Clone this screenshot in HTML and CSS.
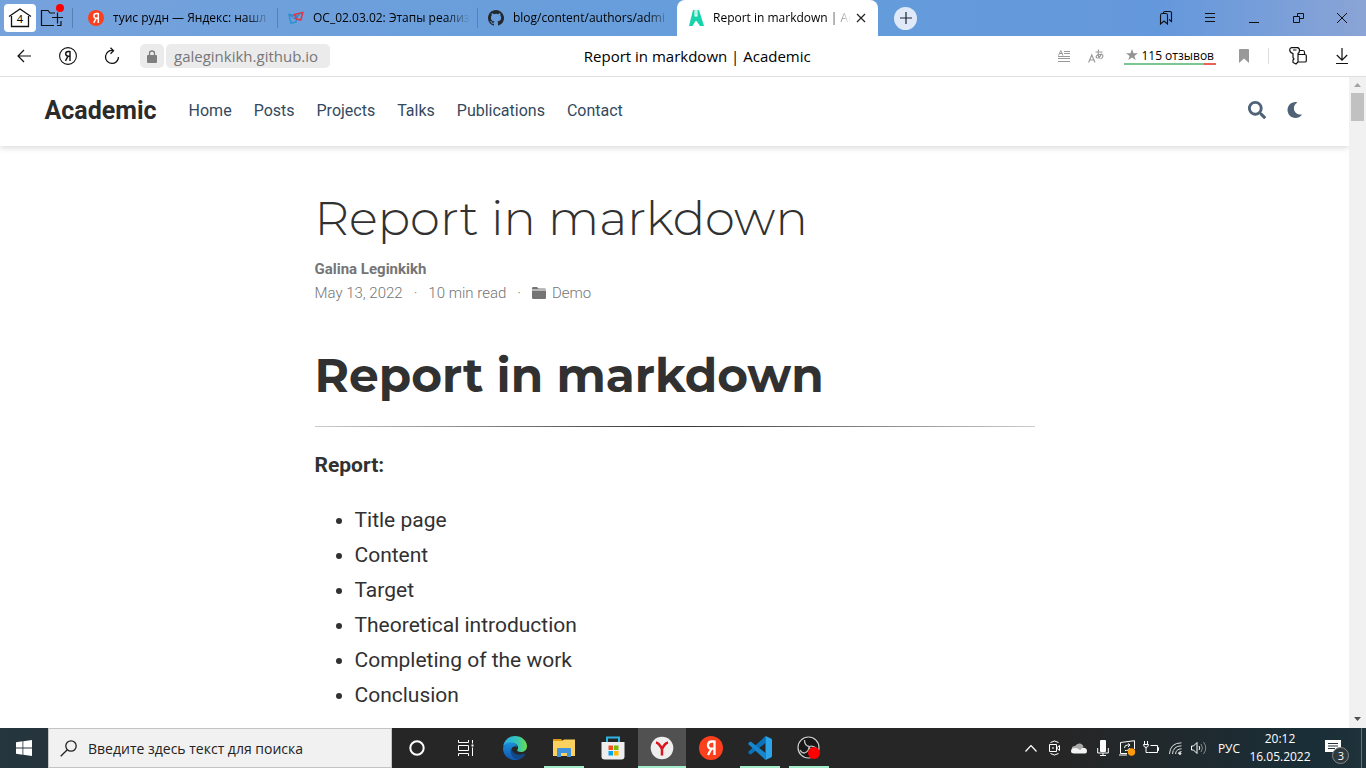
FILE: index.html
```html
<!DOCTYPE html>
<html lang="ru">
<head>
<meta charset="utf-8">
<meta name="viewport" content="width=device-width, initial-scale=1">
<title>Report in markdown | Academic</title>
<link rel="stylesheet" href="styles.css">
</head>
<body>
<header class="tabstrip">
  <button class="home-btn" aria-label="4 tabs">
    <svg width="24" height="22" viewBox="0 0 24 22" fill="none" stroke="#111" stroke-width="1.3"><path d="M3.500 9v10.500h17V9M1 9.500 12 2l11 7.500"/></svg>
    <span class="home-count">4</span>
  </button>
  <button class="icon-btn group-btn" aria-label="Tab groups">
    <svg width="26" height="28" viewBox="0 0 26 28" fill="none" stroke="#111" stroke-width="1.2"><path d="M15 23.500H2.500v-15h6.500l2 2.500h5M22 19v4.500h-4M18.500 10.500v11M13 15.500h11"/><circle cx="21" cy="6" r="4" fill="#f00" stroke="none"/></svg>
  </button>
  <nav class="tabs">
    <a class="tab tab-first" href="#">
      <svg width="16" height="16" viewBox="0 0 16 16"><circle cx="8" cy="8" r="8" fill="#fc3f1d"/><path d="M10.300 3.500H8.500C6.800 3.500 5.900 4.500 5.900 5.900c0 1.500.9 2.300 2.700 2.300h1.700M8.200 8.200l-2.500 4.600M10.300 3v10" fill="none" stroke="#fff" stroke-width="1.500"/></svg>
      <span class="tab-title">туис рудн — Яндекс: нашл</span>
    </a>
    <a class="tab" href="#">
      <svg width="16" height="16" viewBox="0 0 16 16" fill="none" stroke-width="1.600"><path d="M1 4.500 9 6 8 12 3 13Z" stroke="#3191cf"/><path d="M6.500 4.500 14.800 2.500 12.800 10 8.500 9Z" stroke="#e8343f"/><path d="m2 5 5 4 6-6" stroke="#3877b4" stroke-width="1"/></svg>
      <span class="tab-title">ОС_02.03.02: Этапы реализ</span>
    </a>
    <a class="tab" href="#">
      <svg width="16" height="16" viewBox="0 0 16 16" fill="#24292f"><path d="M8 0C3.580 0 0 3.580 0 8c0 3.540 2.290 6.530 5.470 7.590.4.070.55-.17.55-.38 0-.19-.01-.82-.01-1.490-2.010.37-2.530-.49-2.690-.94-.09-.23-.48-.94-.82-1.130-.28-.15-.68-.52-.01-.53.63-.01 1.080.58 1.230.82.72 1.210 1.870.87 2.330.66.07-.52.28-.87.51-1.070-1.780-.2-3.640-.89-3.640-3.950 0-.87.31-1.590.82-2.150-.08-.2-.36-1.020.08-2.120 0 0 .67-.21 2.200.82a7.600 7.600 0 0 1 4 0c1.530-1.040 2.200-.82 2.200-.82.44 1.100.16 1.920.08 2.120.51.56.82 1.270.82 2.150 0 3.070-1.870 3.750-3.650 3.950.29.25.54.73.54 1.480 0 1.070-.01 1.930-.01 2.200 0 .21.15.46.55.38A8 8 0 0 0 8 0"/></svg>
      <span class="tab-title">blog/content/authors/admi</span>
    </a>
    <a class="tab tab-active" href="#" aria-current="page">
      <svg width="16" height="16" viewBox="0 0 16 16"><path d="M5 0h1.500v6.500h3V0H11l5 16h-4L8.500 11h-1L4.500 16H1Z" fill="#17d3ab"/><path d="M7.300 0h1.400v5.500H7.300Z" fill="#9aeedb"/></svg>
      <span class="tab-title">Report in markdown | Ac</span>
      <svg width="10" height="10" viewBox="0 0 10 10" stroke="#222" stroke-width="1.200"><path d="m1 1 8 8M9 1 1 9"/></svg>
    </a>
  </nav>
  <button class="new-tab" aria-label="New tab"><svg width="12" height="12" viewBox="0 0 12 12" stroke="#1d2733" stroke-width="1.200"><path d="M6 0v12M0 6h12"/></svg></button>
  <div class="window-buttons">
    <button class="icon-btn" aria-label="Bookmarks"><svg width="14" height="16" viewBox="0 0 14 16" fill="none" stroke="#111" stroke-width="1.100"><path d="M1.500 5.500Q1.500 3.500 3 3.500H7Q8.500 3.500 8.500 5.500V14L5 11 1.500 14ZM4.500 3.500V2.500Q4.500 1.500 6 1.500H11Q12.500 1.500 12.500 3V11.500L10 9.500"/></svg></button>
    <button class="icon-btn" aria-label="Menu"><svg width="10" height="10" viewBox="0 0 10 10" stroke="#111"><path d="M0 .5h10M0 4.500h10M0 8.500h10"/></svg></button>
    <button class="icon-btn" aria-label="Minimize"><svg width="10" height="10" viewBox="0 0 10 10" stroke="#111"><path d="M0 9.500h10"/></svg></button>
    <button class="icon-btn" aria-label="Restore"><svg width="11" height="10" viewBox="0 0 11 10" fill="none" stroke="#111"><path d="M.5 3.500h6v6h-6ZM4.500 3.500v-3h6v5h-4"/></svg></button>
    <button class="icon-btn" aria-label="Close"><svg width="10" height="10" viewBox="0 0 10 10" stroke="#111"><path d="m0 0 10 10M10 0 0 10"/></svg></button>
  </div>
</header>

<div class="toolbar">
  <div class="nav-buttons">
    <button class="icon-btn" aria-label="Back"><svg width="14" height="14" viewBox="0 0 14 14" fill="none" stroke="#111" stroke-width="1.200"><path d="M14 7H1M7 1 1 7l6 6"/></svg></button>
    <button class="icon-btn" aria-label="Yandex"><svg width="18" height="18" viewBox="0 0 18 18" fill="none" stroke="#111" stroke-width="1.100"><circle cx="9" cy="9" r="8.400"/><path d="M11 4.500H9.300C7.500 4.500 6.700 5.500 6.700 6.800 6.700 8.300 7.600 9.200 9.300 9.200H11M9 9.200 6.500 13.800M11 4v10" stroke-width="1.400"/></svg></button>
    <button class="icon-btn" aria-label="Reload"><svg width="16" height="18" viewBox="0 0 16 18" fill="none" stroke="#111" stroke-width="1.300"><path d="M9 3.500A6.500 6.500 0 1 0 14.500 10M6.500.7 9.500 3.700 6.500 6.700"/></svg></button>
  </div>
  <button class="lock-btn" aria-label="Secure"><svg width="10" height="13" viewBox="0 0 10 13"><path d="M2.500 6V3.500a2.500 2.500 0 0 1 5 0V6" fill="none" stroke="#7e7e7e" stroke-width="1.300"/><rect y="5" width="10" height="8" rx="1" fill="#7e7e7e"/></svg></button>
  <button class="domain">galeginkikh.github.io</button>
  <div class="page-title">Report in markdown | Academic</div>
  <div class="tools">
    <button class="icon-btn" aria-label="Reader mode"><svg width="12" height="12" viewBox="0 0 12 12" fill="none" stroke="#999"><path d="M6 1.500h6M6 3.500h6M0 6.500h12M0 8.500h12M0 11.500h12M.5 5.500 2.800.5 5 5.500M1.500 3.500h3"/></svg></button>
    <button class="icon-btn" aria-label="Translate"><svg width="16" height="14" viewBox="0 0 16 14" fill="none" stroke="#999" stroke-width="1.100"><path d="M.6 13.500 3.800 6 7 13.500M1.800 11h4M7.500 3h7M10.500.5Q9.500 6 11.500 9.500M13.500 4.500Q12 9 9 9 7 8 9.500 6 15 4 15 7 15 9 12.500 10"/></svg></button>
    <button class="reviews"><svg width="12" height="12" viewBox="0 0 12 12"><path d="m6 0 1.500 4.200H12L8.400 6.900 9.700 11 6 8.500 2.300 11l1.300-4.100L0 4.200h4.500Z" fill="#939393"/></svg>115 отзывов</button>
    <button class="icon-btn" aria-label="Bookmark"><svg width="10" height="14" viewBox="0 0 10 14"><path d="M0 1Q0 0 1 0h8q1 0 1 1v13L5 9.500 0 14Z" fill="#999"/></svg></button>
    <span class="divider"></span>
    <button class="icon-btn" aria-label="Passwords"><svg width="18" height="18" viewBox="0 0 18 18" fill="none" stroke="#111" stroke-width="1.200"><path d="M2.500.7h6q2 .3 2 2.800 0 2-1.500 3v8.500L7 17l-3-1.500V13l1-1-1-1.500V6.500Q.7 5.500.7 3 .7 1 2.500.7ZM4 3h3.500M10.500 3.500H14Q15.500 3.500 15.500 5.500V7.500M9.500 7.500H16q1.300 0 1.300 1.300v4.900Q17.300 15 16 15H9.500"/></svg></button>
    <button class="icon-btn" aria-label="Downloads"><svg width="12" height="16" viewBox="0 0 12 16" fill="none" stroke="#111" stroke-width="1.200"><path d="M6 0v12M.8 7 6 12.200 11.200 7M0 15.500h12"/></svg></button>
  </div>
</div>

<div class="viewport">
  <div class="page">
    <nav class="navbar">
      <div class="navbar-inner">
        <a class="brand" href="#">Academic</a>
        <div class="nav-links">
          <a href="#">Home</a><a href="#">Posts</a><a href="#">Projects</a><a href="#">Talks</a><a href="#">Publications</a><a href="#">Contact</a>
        </div>
        <div class="nav-icons">
          <button class="icon-btn" aria-label="Search"><svg width="18" height="18" viewBox="0 0 512 512" fill="#506278"><path d="M505 442.700 405.300 343c-4.500-4.500-10.600-7-17-7H372c27.600-35.300 44-79.700 44-128C416 93.100 322.900 0 208 0S0 93.100 0 208s93.100 208 208 208c48.300 0 92.700-16.400 128-44v16.300c0 6.400 2.500 12.500 7 17l99.700 99.700c9.400 9.400 24.600 9.400 33.900 0l28.300-28.300c9.400-9.400 9.400-24.600.1-34zM208 336c-70.700 0-128-57.200-128-128 0-70.700 57.200-128 128-128 70.700 0 128 57.200 128 128 0 70.700-57.200 128-128 128z"/></svg></button>
          <button class="icon-btn" aria-label="Dark mode"><svg width="16" height="16" viewBox="27 0 480 512" fill="#506278"><path d="M283.200 512c79 0 151.100-35.900 198.900-94.800 7.100-8.700-.6-21.400-11.600-19.400-124.200 23.700-238.300-71.600-238.300-197 0-72.200 38.700-138.600 101.500-174.400 9.700-5.500 7.300-20.200-3.800-22.200A258 258 0 0 0 283.200 0c-141.300 0-256 114.500-256 256 0 141.300 114.500 256 256 256z"/></svg></button>
        </div>
      </div>
    </nav>
    <article class="article">
      <h1 class="title">Report in markdown</h1>
      <div class="authors">Galina Leginkikh</div>
      <div class="meta">
        <span>May 13, 2022</span><span>·</span><span>10 min read</span><span>·</span>
        <a href="#"><svg width="14" height="12" viewBox="0 0 14 12" fill="#757575"><path d="M0 1.300Q0 0 1.300 0H5l1.500 1.500h6.200Q14 1.500 14 2.500H0ZM0 3.500h14v7.200q0 1.300-1.300 1.300H1.300Q0 12 0 10.700Z"/></svg>Demo</a>
      </div>
      <h1 class="heading">Report in markdown</h1>
      <hr class="rule">
      <p class="lead"><strong>Report:</strong></p>
      <ul class="list">
        <li>Title page</li><li>Content</li><li>Target</li><li>Theoretical introduction</li><li>Completing of the work</li><li>Conclusion</li>
      </ul>
    </article>
  </div>
  <div class="scrollbar" aria-hidden="true">
    <svg width="17" height="16" viewBox="0 0 17 16"><path d="m5 10 3.500-4 3.500 4Z" fill="#a3a3a3"/></svg>
    <div class="thumb"></div>
    <svg width="17" height="17" viewBox="0 0 17 17"><path d="m5 6 3.500 4L12 6Z" fill="#505050"/></svg>
  </div>
</div>

<footer class="taskbar">
  <button class="start" aria-label="Start"><svg width="16" height="16" viewBox="0 0 16 16" fill="#fff"><path d="M0 2.200 6.500 1.300V7.600H0ZM7.300 1.200 16 0v7.600H7.300ZM0 8.400h6.500v6.300L0 13.800ZM7.300 8.400H16V16l-8.700-1.200Z"/></svg></button>
  <label class="search">
    <svg width="17" height="17" viewBox="0 0 17 17" fill="none" stroke="#222" stroke-width="1.300"><circle cx="11" cy="6" r="5.200"/><path d="M7.300 9.700.7 16.300"/></svg>
    <input type="text" placeholder="Введите здесь текст для поиска" aria-label="Поиск">
  </label>
  <div class="apps">
    <button class="app" aria-label="Cortana"><svg width="16" height="16" viewBox="0 0 16 16"><circle cx="8" cy="8" r="6.700" fill="none" stroke="#fff" stroke-width="2"/></svg></button>
    <button class="app" aria-label="Task view"><svg width="16" height="16" viewBox="0 0 16 16" fill="none" stroke="#fff"><path d="M.5 0v2.500h10V0M.5 16v-2.500h10V16M.5 5.500h10v5H.5ZM14.500 0v16"/><path d="M13 4h3v3h-3Z" fill="#fff" stroke="#262626"/></svg></button>
    <button class="app" aria-label="Edge"><svg width="24" height="24" viewBox="0 0 24 24"><defs><linearGradient id="eg" x1="0" x2="1"><stop stop-color="#2aa9e8"/><stop offset=".6" stop-color="#35c7b5"/><stop offset="1" stop-color="#6edb4b"/></linearGradient><linearGradient id="eb" y1="0" y2="1" x2="0"><stop stop-color="#1b8fdc"/><stop offset="1" stop-color="#1257ae"/></linearGradient></defs><path d="M0 11C1 4 6 0 12 0c7 0 12 5 12 10 0 4-3 6-6 6-3 0-4.500-1-3.500-2.500C16.500 10 13 7 9 7 4 7 1 9 0 11Z" fill="url(#eg)"/><path d="M0 12C1 8 4 6 8 6.500c3.500 0 6 2 6 4.500-1-1.500-5-1-5.500 2.500C8 18 13 21 22 18c-2 4-6 6-10 6C5 24 0 19 0 12Z" fill="url(#eb)"/><path d="M8.500 12C6 16 9 22 14 23.500c4-.5 7-3 8.500-6C17 20 9 18.500 8.500 12Z" fill="#124887"/></svg></button>
    <button class="app app-open" aria-label="Explorer"><svg width="22" height="20" viewBox="0 0 22 20"><path d="M0 1h8l2 2H0Z" fill="#dd9b12"/><path d="M0 3h9l2-1.500h11V18H0Z" fill="#fbd15f"/><path d="M4 19v-8q0-1 1-1h12q1 0 1 1v8h-4v-4H8v4Z" fill="#4193dc"/></svg></button>
    <button class="app" aria-label="Store"><svg width="24" height="24" viewBox="0 0 24 24"><path d="M6 7V1.500h12V7" fill="none" stroke="#2cb5e4" stroke-width="2"/><path d="M.5 6h23v14.500q0 3-3 3h-17q-3 0-3-3Z" fill="#eee"/><path d="M7.500 9.500H12V14H7.500Z" fill="#f25022"/><path d="M13 9.500h4.500V14H13Z" fill="#7fba00"/><path d="M7.500 15H12v4.500H7.500Z" fill="#00a4ef"/><path d="M13 15h4.500v4.500H13Z" fill="#ffb900"/></svg></button>
    <button class="app app-active" aria-label="Yandex Browser"><svg width="24" height="24" viewBox="0 0 24 24"><circle cx="12" cy="12" r="11.300" fill="#eee"/><path d="M6 6.500q3 .5 6 6.500 3-6 6-6.500M12 12v7.500" fill="none" stroke="#d8171c" stroke-width="2.500"/></svg></button>
    <button class="app" aria-label="Yandex"><svg width="24" height="24" viewBox="0 0 24 24"><circle cx="12" cy="12" r="12" fill="#fc3f1d"/><path d="M15.500 5.500h-2.300C10.500 5.500 9 7 9 9.200c0 2.300 1.400 3.500 4 3.500h2.500M12.500 12.500 9 19M15.500 4.500V19" fill="none" stroke="#fff" stroke-width="2.300"/></svg></button>
    <button class="app app-open" aria-label="Visual Studio Code"><svg width="24" height="24" viewBox="0 0 24 24"><path d="M17.500 0v7L3 18.200Q2 18.700 1.500 18L.4 16.800Q0 16.200.6 15.600Z" fill="#0a72b8"/><path d="M17.500 24v-7L3 5.800Q2 5.300 1.500 6L.4 7.200Q0 7.800.6 8.400Z" fill="#1686ce"/><path d="m17.500 0 5.500 2.600Q24 3 24 4v16q0 1-1 1.400L17.500 24Z" fill="#2ca4ea"/></svg></button>
    <button class="app app-open" aria-label="OBS"><svg width="24" height="24" viewBox="0 0 24 24"><circle cx="11.500" cy="11.500" r="10.500" fill="#171717" stroke="#d0d0d0" stroke-width="1.200"/><path d="M7.500 4q0 5.500 4.500 6.500 4.500-1.500 7.500 2M12 10.500q0 5-4.500 6.500-3 0-4.500-3M12 10.500l3.500 7" fill="none" stroke="#bbb" stroke-width="1.300"/><circle cx="17" cy="17" r="6" fill="#f00"/></svg></button>
  </div>
  <div class="tray">
    <button class="tray-btn" aria-label="Show hidden"><svg width="12" height="7" viewBox="0 0 12 7" fill="none" stroke="#fff" stroke-width="1.200"><path d="m.5 6.500 5.500-6 5.500 6"/></svg></button>
    <button class="tray-btn" aria-label="Camera"><svg width="12" height="16" viewBox="0 0 12 16" fill="none" stroke="#fff"><path d="M1.500 2.500Q5.500-.5 9.500 2.500M1.500 13.500q4 3 8 0M.5 4.500h7v7h-7ZM7.500 8l3-2.500v5Z"/><path d="M4 7v2"/></svg></button>
    <button class="tray-btn" aria-label="OneDrive"><svg width="16" height="11" viewBox="0 0 16 11"><path d="M1 7Q0 3 4 3 6 0 9 .5q3 .5 3.500 3.500L8 8Z" fill="#aaa"/><path d="M3 10.500q-3 0-3-2.500 0-3 4-3 3 0 5 2 2-3 5-2 2 .7 2 3 0 2.500-2 2.500Z" fill="#f4f4f4"/></svg></button>
    <button class="tray-btn" aria-label="Microphone"><svg width="12" height="16" viewBox="0 0 12 16"><rect x="3" width="6" height="12" rx="1" fill="#fff"/><path d="M.7 8v5h10.600V8M6 13v3M3 15.500h6" fill="none" stroke="#fff"/></svg></button>
    <button class="tray-btn" aria-label="Update"><svg width="17" height="16" viewBox="0 0 17 16" fill="none" stroke="#fff"><path d="M8 13.500H1.500v-11L15.500.7V9M0 15h8"/><path d="M5.500 8Q5.500 5 8.500 5h2M9 3.500 11 5 9 7M10.500 8q0 2.500-3 2.500H6"/><circle cx="12.500" cy="12" r="3.700" fill="#ff9a0c" stroke="none"/></svg></button>
    <button class="tray-btn" aria-label="Battery"><svg width="17" height="14" viewBox="0 0 17 14" fill="none" stroke="#fff"><path d="M7.500 4.500h7v7h-9M14.500 6.500h1v3h-1M1.500 0v3M4.500 0v3M.5 3.500h5Q5.500 6 3 6.500.5 6 .5 3.500M3 6v5.500h2.500"/></svg></button>
    <button class="tray-btn" aria-label="Wi-Fi"><svg width="13" height="13" viewBox="0 0 13 13" fill="none" stroke="#ddd"><path d="M.5 12Q1 1 12.500.8M3.500 12Q4 4 12.500 3.800M6.500 12Q7 7 12.500 6.800M9 12q.5-2.500 3.500-2.500"/><circle cx="11" cy="11.500" r="1" fill="#fff"/></svg></button>
    <button class="tray-btn" aria-label="Volume"><svg width="16" height="14" viewBox="0 0 16 14" fill="none" stroke="#fff"><path d="M.5 5v4h2L6 12.500v-11L2.500 5Z"/><path d="M8 5q1.500 2 0 4"/><path d="M10 3q3 4 0 8M12.500 1q4.500 6 0 12" stroke="#888"/></svg></button>
    <button class="lang">РУС</button>
    <button class="clock"><span>20:12</span><span>16.05.2022</span></button>
    <button class="notify" aria-label="Notifications"><svg width="24" height="24" viewBox="0 0 24 24"><path d="M0 0h16v12h-4v4l-4-4H0Z" fill="#fff"/><path d="M3 3.500h10M3 6h10M3 8.500h7" stroke="#26343a"/><circle cx="15.500" cy="15.500" r="8" fill="#303a3e" stroke="#888"/></svg><span class="badge">3</span></button>
    <span class="peek"></span>
  </div>
</footer>
</body>
</html>
```

FILE: styles.css
```css
* { box-sizing: border-box; }
html, body { height: 100%; margin: 0; }
body {
  display: flex;
  flex-direction: column;
  overflow: hidden;
  background: #fff;
  color: #000;
  font-family: "Segoe UI", "Open Sans", "Noto Sans", sans-serif;
  font-size: 12px;
}
a { color: inherit; text-decoration: none; }
button {
  margin: 0;
  padding: 0;
  border: 0;
  background: none;
  color: inherit;
  font: inherit;
}
svg { display: block; flex: none; }
.icon-btn { display: flex; align-items: center; justify-content: center; }

/* Tab strip */
.tabstrip {
  display: flex;
  align-items: stretch;
  height: 36px;
  flex: none;
  padding: 0 2px 0 4px;
  background: linear-gradient(90deg, #76a2dc, #6b9fdb 30%, #649cdb 60%, #6498dc 85%, #8aa4d6);
}
.home-btn {
  position: relative;
  display: flex;
  align-items: center;
  justify-content: center;
  width: 32px;
  height: 28px;
  margin-top: 4px;
  border-radius: 4px;
  background: #fff;
}
.home-count { position: absolute; inset: 7px 0 0; font-size: 11px; line-height: 16px; }
.group-btn { width: 36px; align-items: flex-start; justify-content: flex-start; padding: 2px 0 0 3px; }
.tabs { display: flex; flex: 0 1 806px; min-width: 0; }
.tab {
  display: flex;
  align-items: center;
  gap: 9px;
  flex: 0 1 200px;
  min-width: 0;
  padding: 0 7px 0 11px;
  background: linear-gradient(#5781b2, #5781b2) left center / 1px 20px no-repeat;
}
.tab-first { flex-basis: 205px; padding-left: 16px; }
.tab-active {
  flex-basis: 201px;
  padding-right: 12px;
  border-radius: 8px 8px 0 0;
  background: #fff;
}
.tab-title {
  flex: 1;
  min-width: 0;
  overflow: hidden;
  white-space: nowrap;
  line-height: 20px;
  mask-image: linear-gradient(90deg, #000 calc(100% - 24px), transparent);
}
.tab-active .tab-title { margin-right: -4px; }
.new-tab {
  display: flex;
  align-items: center;
  justify-content: center;
  align-self: center;
  width: 23px;
  height: 23px;
  margin-left: 16px;
  border-radius: 50%;
  background: #dfe9f7;
}
.window-buttons { display: flex; margin-left: auto; }
.window-buttons .icon-btn { width: 44px; }

/* Address bar */
.toolbar {
  display: flex;
  align-items: center;
  height: 41px;
  flex: none;
  padding: 0 2px;
  border-bottom: 1px solid #dfdfdf;
  background: #fff;
  font-size: 15px;
}
.nav-buttons { display: flex; }
.nav-buttons .icon-btn { width: 44px; height: 40px; }
.lock-btn {
  display: flex;
  align-items: center;
  justify-content: center;
  width: 24px;
  height: 24px;
  margin: 0 2px 0 6px;
  border-radius: 5px;
  background: #ebebeb;
}
.domain {
  height: 24px;
  padding: 0 12px 0 8px;
  border-radius: 5px;
  background: #ebebeb;
  color: #777;
  line-height: 24px;
}
.page-title {
  flex: 1;
  min-width: 0;
  padding-left: 16px;
  overflow: hidden;
  text-align: center;
  white-space: nowrap;
}
.tools { display: flex; align-items: center; }
.tools .icon-btn { width: 32px; height: 40px; }
.reviews {
  display: flex;
  align-items: center;
  gap: 3px;
  min-width: 91px;
  height: 18px;
  margin: 0 12px;
  padding: 0 2px;
  border-bottom: 2px solid;
  border-image: linear-gradient(90deg, #7ac591 86%, #ea6159 86%) 1;
  font-size: 12px;
  white-space: nowrap;
}
.divider { width: 1px; height: 16px; margin: 0 13px 0 8px; background: #ddd; }
.tools .divider + .icon-btn { margin-right: 12px; }
.tools .icon-btn:last-child { margin-right: 6px; }

/* Site */
.viewport { display: flex; flex: 1; min-height: 0; }
.page {
  flex: 1;
  min-width: 0;
  overflow: hidden;
  color: #313131;
  font-family: Roboto, sans-serif;
}
.navbar { height: 69px; padding: 0 44px; background: #fff; box-shadow: 0 2px 6px rgba(0, 0, 0, .15); }
.navbar-inner {
  display: flex;
  align-items: center;
  max-width: 1260px;
  height: 66px;
  margin: 0 auto;
  padding-right: 2px;
}
.brand { color: #2b2b2b; font-size: 25px; font-weight: 700; }
.nav-links { display: flex; gap: 22px; margin-left: 32px; color: #34495e; font-size: 16px; }
.nav-icons { display: flex; gap: 21px; margin-left: auto; }
.article { max-width: 720px; margin: 0 auto; padding-top: 42px; }
.title, .heading { margin: 0; font-family: Montserrat, Inter, sans-serif; line-height: 60px; }
.title { font-size: 48px; font-weight: 300; }
.heading { margin-top: 41px; font-size: 47px; font-weight: 700; }
.authors, .meta { color: #757575; font-size: 15px; line-height: 24px; }
.authors { margin-top: 9px; font-weight: 700; }
.meta { display: flex; gap: 11px; font-weight: 300; }
.meta a { display: flex; align-items: center; gap: 6px; }
.rule {
  height: 1px;
  margin: 20px 0 21px;
  border: 0;
  background: linear-gradient(90deg, #ccc, #333, #ccc);
}
.lead, .list { margin: 0; font-size: 21px; line-height: 35px; }
.list { margin-top: 20px; padding-left: 40px; }

/* Scrollbar */
.scrollbar { display: flex; flex-direction: column; width: 17px; flex: none; background: #f1f1f1; }
.thumb { width: 13px; height: 28px; margin: 0 2px auto; background: #c1c1c1; }

/* Taskbar */
.taskbar {
  display: flex;
  height: 40px;
  flex: none;
  background: linear-gradient(90deg, #25363f 0, #262626 28%, #262626 78%, #192e37 96%, #20323a);
  color: #fff;
}
.start { display: flex; align-items: center; justify-content: center; width: 48px; }
.search {
  display: flex;
  align-items: center;
  gap: 11px;
  flex: 0 1 344px;
  min-width: 0;
  padding: 0 11px;
  border: 1px solid #c4c4c4;
  background: #f1f1f1;
}
.search input {
  flex: 1;
  min-width: 0;
  padding: 0;
  border: 0;
  outline: 0;
  background: none;
  font: inherit;
  font-size: 14px;
}
.search input::placeholder { color: #222; opacity: 1; }
.apps { display: flex; gap: 1px; margin-left: 1px; }
.app { display: flex; align-items: center; justify-content: center; width: 48px; }
.app-open { background: linear-gradient(#a5edca, #a5edca) center bottom / 40px 2px no-repeat; }
.app-active { border-top: 2px solid #515151; border-bottom: 2px solid #a5edca; background: #515151; }
.tray { display: flex; margin-left: auto; }
.tray-btn { display: flex; align-items: center; justify-content: center; width: 24px; }
.lang { width: 36px; }
.clock {
  display: flex;
  flex-direction: column;
  align-items: center;
  justify-content: center;
  width: 66px;
  line-height: 18px;
}
.notify { position: relative; display: flex; width: 48px; padding: 12px 12px 0; }
.badge { position: absolute; left: 24px; top: 20px; width: 8px; font-size: 11px; line-height: 16px; }
.peek { width: 1px; margin-right: 4px; background: #64737a; }
```
